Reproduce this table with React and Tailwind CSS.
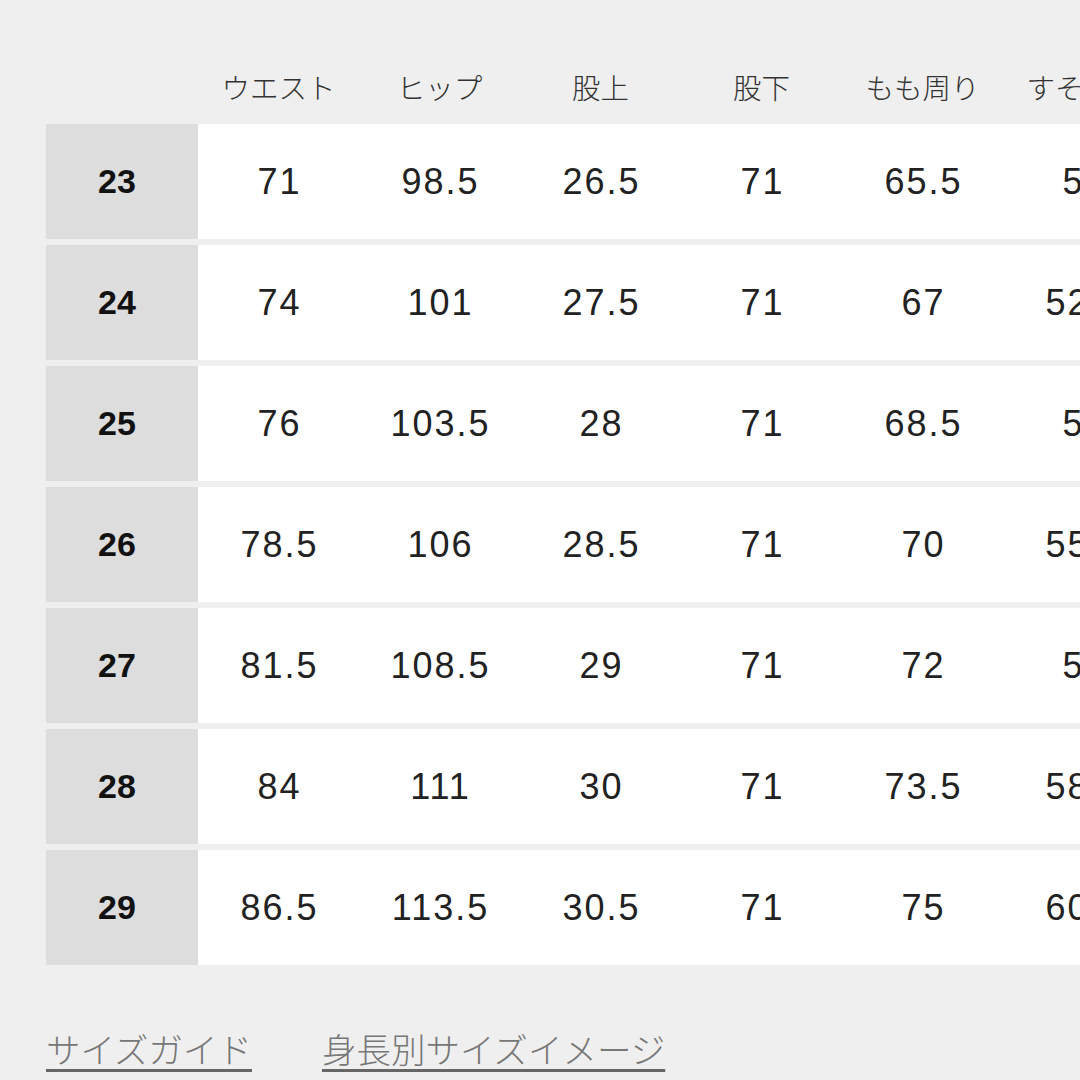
import React from "react";

const headers = ["ウエスト", "ヒップ", "股上", "股下", "もも周り", "すそ周り"];

const rows = [
  ["23", "71", "98.5", "26.5", "71", "65.5", "51"],
  ["24", "74", "101", "27.5", "71", "67", "52.5"],
  ["25", "76", "103.5", "28", "71", "68.5", "54"],
  ["26", "78.5", "106", "28.5", "71", "70", "55.5"],
  ["27", "81.5", "108.5", "29", "71", "72", "57"],
  ["28", "84", "111", "30", "71", "73.5", "58.5"],
  ["29", "86.5", "113.5", "30.5", "71", "75", "60.5"],
];

export default function App() {
  return (
    <div className="w-[1080px] h-[1080px] overflow-hidden bg-[#efefef] font-['Liberation_Sans','Noto_Sans_CJK_JP',sans-serif]">
      <div className="pl-[46px] pt-[62px] w-[1200px]">
        {/* header */}
        <div className="grid grid-cols-[152px_repeat(6,161px)] h-[50px] items-center">
          <div />
          {headers.map((h) => (
            <div key={h} className="text-center text-[28.5px] text-[#333] whitespace-nowrap font-['Noto_Sans_CJK_JP',sans-serif] font-light">
              {h}
            </div>
          ))}
        </div>

        {/* body */}
        <div className="mt-[12px] flex flex-col gap-[6px]">
          {rows.map((r) => (
            <div key={r[0]} className="grid grid-cols-[152px_repeat(6,161px)] h-[115px] items-stretch">
              <div className="bg-[#dddddd] flex items-center justify-center pr-[10px] text-[34px] font-bold text-[#111]">
                {r[0]}
              </div>
              {r.slice(1).map((v, i) => (
                <div key={i} className="bg-white flex items-center justify-center pl-[2px] text-[36px] tracking-[2px] text-[#222]">
                  {v}
                </div>
              ))}
            </div>
          ))}
        </div>

        {/* links */}
        <div className="mt-[62px] flex gap-[70px] text-[34.5px] leading-[42px] text-[#777] font-['Noto_Sans_CJK_JP',sans-serif] font-light">
          <a className="underline decoration-[#666] decoration-[3px] underline-offset-[6px]">サイズガイド</a>
          <a className="underline decoration-[#666] decoration-[3px] underline-offset-[6px]">身長別サイズイメージ</a>
        </div>
      </div>
    </div>
  );
}
